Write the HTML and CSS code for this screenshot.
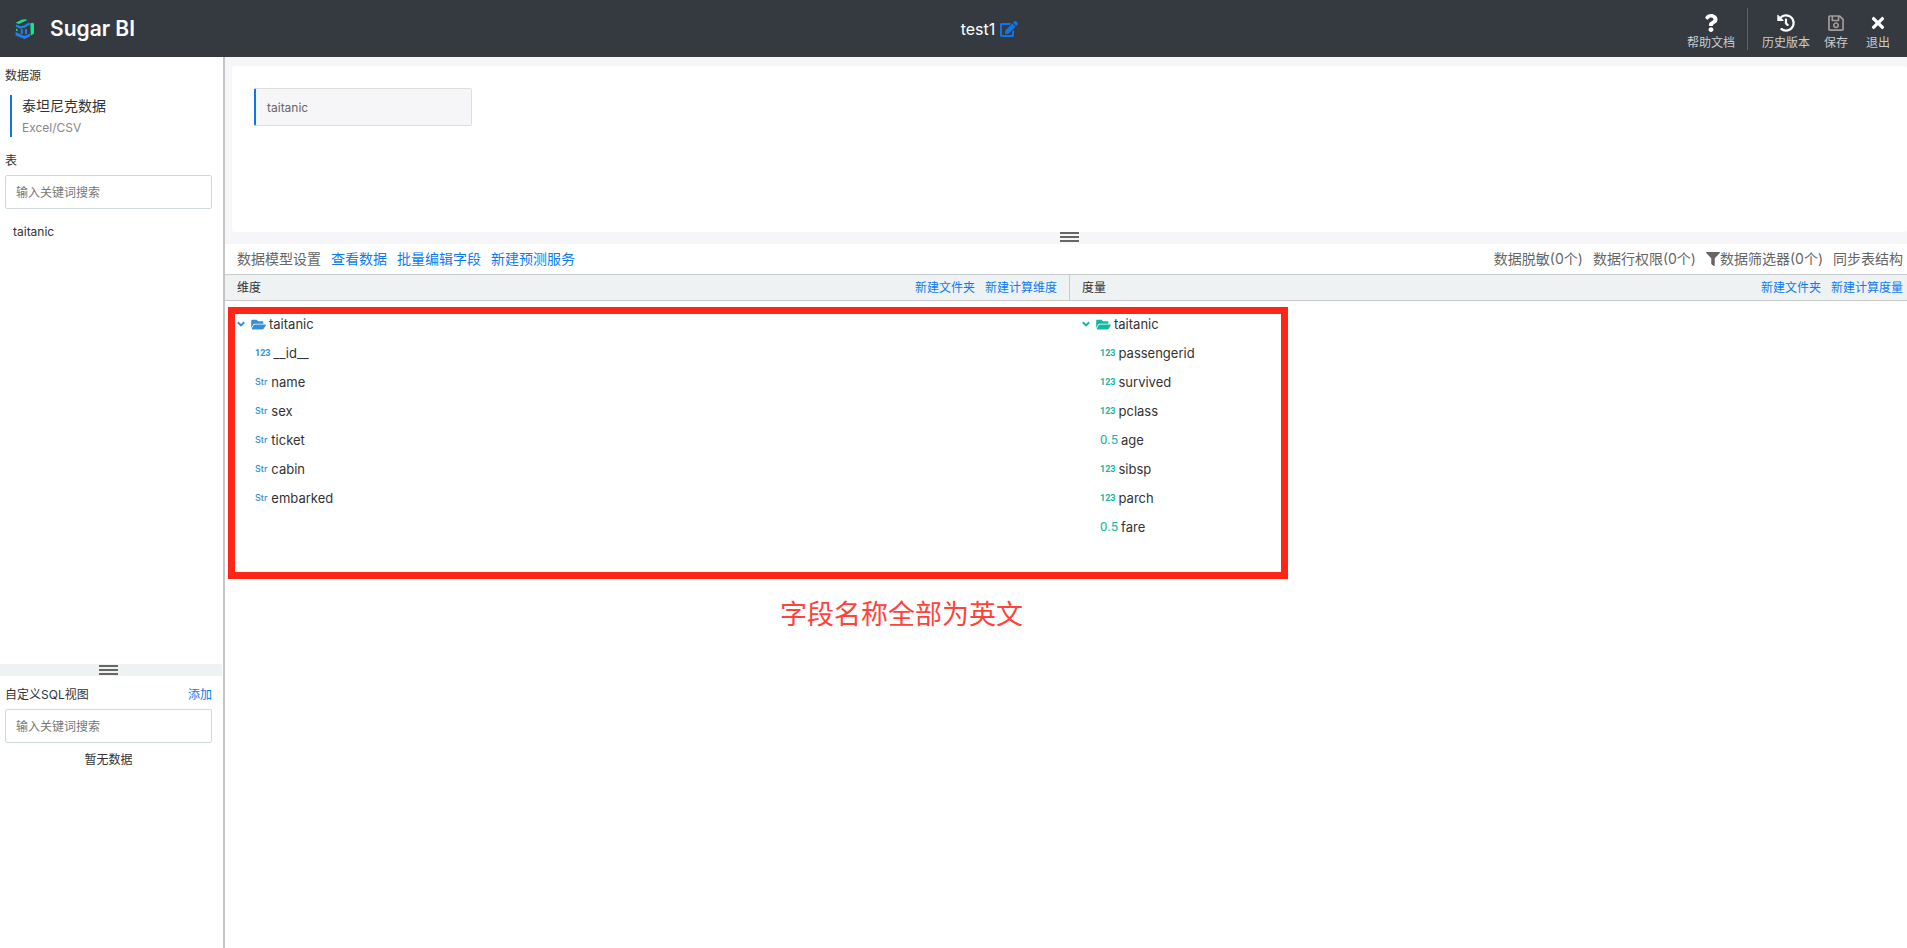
FILE: index.html
```html
<!DOCTYPE html>
<html lang="zh-CN">
<head>
<meta charset="utf-8">
<title>Sugar BI</title>
<link rel="stylesheet" href="styles.css">
</head>
<body>
<svg class="defs" aria-hidden="true">
  <symbol id="folder" viewBox="0 0 576 512"><path d="M572.694 292.093L500.27 416.248A63.997 63.997 0 0 1 444.989 448H45.025c-18.523 0-30.064-20.093-20.731-36.093l72.424-124.155A64 64 0 0 1 152 256h399.964c18.523 0 30.064 20.093 20.73 36.093zM152 224h328v-48c0-26.51-21.49-48-48-48H272l-64-64H48C21.49 64 0 85.49 0 112v278.046l69.077-118.418C86.214 242.25 117.989 224 152 224z"/></symbol>
  <symbol id="chevron" viewBox="0 0 8 8"><path d="M0.800 2.200L4 5.400l3.200-3.200" fill="none" stroke="currentColor" stroke-width="2"/></symbol>
</svg>

<header class="topbar">
  <div class="brand">
    <svg class="logo" viewBox="0 0 20 20" aria-hidden="true">
      <path fill="#12e58b" d="M0.800 3.800L7 0.600L11 0.200L12 1.200L3.500 5zM15.300 4.300L18.200 3.800L19 5v9.500L15.800 16.800zM1 9.500L2.600 10.500v2L1 11.500z"/>
      <path fill="none" stroke="#1b82f0" stroke-width="2.400" stroke-linejoin="round" d="M1 6.500L5 8.400L9 7.800L14.500 4.500"/>
      <path fill="#1b82f0" d="M5.800 10h2v5h-2zM10 10h2v5h-2zM0.600 13L4 14.600L8 16.600h3L15 14.500v3L9.500 20L0.600 16.600z"/>
    </svg>
    <span>Sugar BI</span>
  </div>
  <div class="title">
    <span>test1</span>
    <button class="edit" aria-label="编辑名称"><svg viewBox="0 0 576 512"><path d="M402.6 83.2l90.2 90.2c3.8 3.8 3.8 10 0 13.8L274.4 405.6l-92.8 10.3c-12.4 1.4-22.9-9.1-21.5-21.5l10.3-92.8L388.8 83.2c3.8-3.8 10-3.8 13.8 0zm162-22.900l-48.800-48.800c-15.200-15.200-39.900-15.200-55.200 0l-35.400 35.400c-3.800 3.800-3.800 10 0 13.800l90.200 90.200c3.800 3.800 10 3.800 13.800 0l35.400-35.400c15.200-15.300 15.200-40 0-55.200zM384 346.200V448H64V128h229.800c3.200 0 6.200-1.300 8.500-3.500l40-40c7.600-7.600 2.200-20.500-8.500-20.500H48C21.500 64 0 85.500 0 112v352c0 26.500 21.500 48 48 48h352c26.500 0 48-21.500 48-48V306.200c0-10.700-12.900-16-20.500-8.500l-40 40c-2.200 2.300-3.500 5.300-3.500 8.500z"/></svg></button>
  </div>
  <nav class="actions">
    <button><svg viewBox="0 0 384 512"><path d="M202.021 0C122.202 0 70.503 32.703 29.914 91.026c-7.363 10.580-5.093 25.086 5.178 32.874l43.138 32.709c10.373 7.865 25.132 6.026 33.253-4.148 25.049-31.381 43.630-49.449 82.757-49.449 30.764 0 68.816 19.799 68.816 49.631 0 22.552-18.617 34.134-48.993 51.164-35.423 19.860-82.299 44.576-82.299 106.405V320c0 13.255 10.745 24 24 24h72.471c13.255 0 24-10.745 24-24v-5.773c0-42.860 125.268-44.645 125.268-160.627C377.504 66.256 286.902 0 202.021 0zM192 373.459c-38.196 0-69.271 31.075-69.271 69.271 0 38.195 31.075 69.270 69.271 69.270s69.271-31.075 69.271-69.271-31.075-69.270-69.271-69.270z"/></svg>帮助文档</button>
    <span class="rule"></span>
    <button><svg viewBox="0 0 512 512"><path d="M504 255.531c.253 136.640-111.180 248.372-247.820 248.468-59.015.042-113.223-20.530-155.822-54.911-11.077-8.940-11.905-25.541-1.839-35.607l11.267-11.267c8.609-8.609 22.353-9.551 31.891-1.984C173.062 425.135 212.781 440 256 440c101.705 0 184-82.311 184-184 0-101.705-82.311-184-184-184-48.814 0-93.149 18.969-126.068 49.932l50.754 50.754c10.080 10.080 2.941 27.314-11.313 27.314H24c-8.837 0-16-7.163-16-16V38.627c0-14.254 17.234-21.393 27.314-11.314l49.372 49.372C129.209 34.136 189.552 8 256 8c136.810 0 247.747 110.780 248 247.531zm-180.912 78.784l9.823-12.630c8.138-10.463 6.253-25.542-4.210-33.679L288 256.349V152c0-13.255-10.745-24-24-24h-16c-13.255 0-24 10.745-24 24v135.651l65.409 50.874c10.463 8.137 25.541 6.253 33.679-4.210z"/></svg>历史版本</button>
    <button class="save"><svg viewBox="0 0 448 512"><path d="M433.941 129.941l-83.882-83.882A48 48 0 0 0 316.118 32H48C21.490 32 0 53.490 0 80v352c0 26.510 21.490 48 48 48h352c26.510 0 48-21.490 48-48V163.882a48 48 0 0 0-14.059-33.941zM272 80v80H144V80h128zm122 352H54a6 6 0 0 1-6-6V86a6 6 0 0 1 6-6h42v104c0 13.255 10.745 24 24 24h176c13.255 0 24-10.745 24-24V83.882l78.243 78.243a6 6 0 0 1 1.757 4.243V426a6 6 0 0 1-6 6zM224 232c-48.523 0-88 39.477-88 88s39.477 88 88 88 88-39.477 88-88-39.477-88-88-88zm0 128c-22.056 0-40-17.944-40-40s17.944-40 40-40 40 17.944 40 40-17.944 40-40 40z"/></svg>保存</button>
    <button><svg viewBox="0 0 352 512"><path d="M242.720 256l100.070-100.070c12.280-12.280 12.280-32.190 0-44.480l-22.240-22.240c-12.280-12.280-32.190-12.280-44.480 0L176 189.280 75.930 89.210c-12.280-12.280-32.190-12.280-44.480 0L9.210 111.450c-12.280 12.280-12.280 32.190 0 44.480L109.280 256 9.210 356.070c-12.280 12.280-12.280 32.190 0 44.480l22.240 22.240c12.280 12.280 32.200 12.280 44.480 0L176 322.720l100.070 100.070c12.280 12.280 32.200 12.280 44.480 0l22.240-22.240c12.280-12.280 12.280-32.190 0-44.480L242.720 256z"/></svg>退出</button>
  </nav>
</header>

<div class="page">
  <aside class="sidebar">
    <section class="sources">
      <h2>数据源</h2>
      <div class="source"><strong>泰坦尼克数据</strong><small>Excel/CSV</small></div>
      <h2><label for="table-search">表</label></h2>
      <input id="table-search" type="text" placeholder="输入关键词搜索">
      <div class="table-name">taitanic</div>
    </section>
    <div class="splitter"><span class="grip"></span></div>
    <section class="views">
      <div class="views-head"><label for="view-search">自定义SQL视图</label><a href="#">添加</a></div>
      <input id="view-search" type="text" placeholder="输入关键词搜索">
      <p>暂无数据</p>
    </section>
  </aside>

  <main class="main">
    <section class="canvas">
      <div class="board"><div class="node">taitanic</div></div>
      <div class="handle"><span class="grip"></span></div>
    </section>
    <div class="toolbar">
      <div class="group"><span>数据模型设置</span><a href="#">查看数据</a><a href="#">批量编辑字段</a><a href="#">新建预测服务</a></div>
      <div class="group">
        <button>数据脱敏(0个)</button>
        <button>数据行权限(0个)</button>
        <button><svg viewBox="0 0 512 512"><path d="M487.976 0H24.028C2.710 0-8.047 25.866 7.058 40.971L192 225.941V432c0 7.831 3.821 15.170 10.237 19.662l80 55.980C298.020 518.690 320 507.493 320 487.980V225.941l184.947-184.970C520.021 25.896 509.338 0 487.976 0z"/></svg>数据筛选器(0个)</button>
        <button>同步表结构</button>
      </div>
    </div>
    <div class="columns heads">
      <div class="head"><h3>维度</h3><a href="#">新建文件夹</a><a href="#">新建计算维度</a></div>
      <div class="head"><h3>度量</h3><a href="#">新建文件夹</a><a href="#">新建计算度量</a></div>
    </div>
    <div class="columns trees">
      <div class="tree dims">
        <div class="root"><svg class="chev"><use href="#chevron"/></svg><svg class="folder"><use href="#folder"/></svg>taitanic</div>
        <ul>
          <li><i class="int">123</i>__id__</li>
          <li><i class="str">Str</i>name</li>
          <li><i class="str">Str</i>sex</li>
          <li><i class="str">Str</i>ticket</li>
          <li><i class="str">Str</i>cabin</li>
          <li><i class="str">Str</i>embarked</li>
        </ul>
      </div>
      <div class="tree measures">
        <div class="root"><svg class="chev"><use href="#chevron"/></svg><svg class="folder"><use href="#folder"/></svg>taitanic</div>
        <ul>
          <li><i class="int">123</i>passengerid</li>
          <li><i class="int">123</i>survived</li>
          <li><i class="int">123</i>pclass</li>
          <li><i class="dec">0.5</i>age</li>
          <li><i class="int">123</i>sibsp</li>
          <li><i class="int">123</i>parch</li>
          <li><i class="dec">0.5</i>fare</li>
        </ul>
      </div>
      <div class="mark"></div>
      <div class="note">字段名称全部为英文</div>
    </div>
  </main>
</div>
</body>
</html>
```
FILE: styles.css
```css
* { box-sizing: border-box; }
body {
  margin: 0;
  min-height: 100vh;
  display: flex;
  flex-direction: column;
  background: #fff;
  color: #333;
  font: 12px/18px Inter, "Noto Sans CJK SC", sans-serif;
}
h2, h3, p, ul { margin: 0; padding: 0; font-size: 12px; font-weight: 400; }
ul { list-style: none; }
button { border: 0; padding: 0; background: none; color: inherit; font: inherit; }
svg { display: block; fill: currentColor; }
a { color: #0d7bf2; text-decoration: none; }
.defs { position: absolute; width: 0; height: 0; }

.topbar {
  display: grid;
  grid-template-columns: 1fr auto 1fr;
  align-items: center;
  height: 57px;
  padding: 0 17px 0 15px;
  background: #343a40;
  color: #fff;
}
.brand { display: flex; align-items: center; gap: 15px; font-size: 21px; font-weight: 600; }
.logo { width: 20px; height: 20px; }
.title { display: flex; align-items: center; gap: 5px; padding-left: 74px; font-size: 16px; }
.edit { color: #0d75ee; }
.edit svg { width: 18px; height: 16px; }
.actions { display: flex; justify-content: flex-end; align-items: center; }
.actions button {
  display: flex;
  flex-direction: column;
  align-items: center;
  gap: 2px;
  margin-left: 14px;
  padding-top: 8px;
  color: #c9cccf;
}
.actions button:last-child { margin-left: 18px; }
.actions svg { width: 18px; height: 18px; color: #fff; }
.actions .save svg { color: #a39c9a; }
.rule { width: 1px; height: 42px; margin-left: 12px; background: #5c6166; }

.page { flex: 1; display: flex; }
.sidebar { width: 225px; border-right: 2px solid #c4c4c4; display: flex; flex-direction: column; }
.sources { flex: 1; padding: 10px 11px 0 5px; }
.source { display: flex; flex-direction: column; margin: 10px 5px 15px; padding-left: 10px; border-left: 2px solid #0d75ee; }
.source strong { font-size: 14px; font-weight: 400; line-height: 22px; }
.source small { padding-top: 1px; font-size: 12px; line-height: 19px; color: #888; }
input {
  display: block;
  width: 100%;
  height: 34px;
  margin-top: 5px;
  padding: 0 10px;
  border: 1px solid #cfdadd;
  border-radius: 2px;
  font: inherit;
}
input::placeholder { color: #777; }
.table-name { padding: 14px 8px; }
.splitter { height: 12px; margin-right: 1px; padding: 1px 5px 0 0; background: #eef2f3; display: flex; justify-content: center; }
.grip {
  width: 19px;
  height: 10px;
  border-top: 2px solid #666;
  border-bottom: 2px solid #666;
  background: linear-gradient(#666, #666) center / 100% 2px no-repeat;
}
.views { height: 272px; padding: 10px 11px 0 5px; }
.views-head { display: flex; justify-content: space-between; }
.views input { margin-top: 5px; }
.views p { padding-top: 8px; text-align: center; }

.main { flex: 1; min-width: 0; display: flex; flex-direction: column; }
.canvas { padding: 9px 0 0 7px; background: #f6f6f9; }
.board { height: 166px; padding: 22px; border-radius: 3px; background: #fff; }
.node {
  width: 218px;
  height: 38px;
  padding-left: 11px;
  border: 1px solid #ddd;
  border-left: 2px solid #0d75ee;
  border-radius: 2px;
  background: #f6f6f9;
  color: #666;
  line-height: 38px;
}
.handle { height: 12px; display: flex; justify-content: center; }
.toolbar { display: flex; justify-content: space-between; height: 30px; padding: 0 4px 0 12px; color: #666; font-size: 14px; line-height: 30px; }
.group { display: flex; gap: 10px; }
.group button { display: flex; align-items: center; height: 30px; }
.group svg { width: 14px; height: 14px; }
.columns { display: grid; grid-template-columns: calc(50% + 3px) 1fr; }
.heads { border: solid #c8cbcc; border-width: 1px 0; background: #eef2f3; }
.head { display: flex; gap: 10px; padding: 1px 12px 0; line-height: 24px; }
.head h3 { flex: 1; }
.head + .head { padding-right: 4px; border-left: 1px solid #c8cbcc; }
.trees { position: relative; flex: 1; align-content: start; }
.tree { padding: 9px 12px; font-size: 13px; }
.tree + .tree { padding-left: 13px; }
.tree ul { font-size: 13px; }
.root { display: flex; align-items: center; height: 28px; }
.chev { width: 8px; height: 8px; margin-right: 6px; }
.folder { width: 15px; height: 13px; margin-right: 3px; }
.dims svg, .dims i { color: #338fd8; }
.measures svg, .measures i { color: #14b8a0; }
.tree li { display: flex; align-items: center; height: 29px; padding-left: 18px; }
.tree i { margin-right: 4px; font-style: normal; }
.tree .int { margin-right: 3px; font: 700 9px Roboto, sans-serif; }
.str { font-size: 9px; font-weight: 500; }
.tree .dec { margin-right: 3px; font: 13px Roboto, sans-serif; }
.mark { position: absolute; left: 3px; top: 6px; width: 63%; height: 272px; border: 7px solid #ff2617; }
.note { position: absolute; left: 33%; top: 294px; color: #ff433b; font-size: 27px; line-height: 40px; }
```
